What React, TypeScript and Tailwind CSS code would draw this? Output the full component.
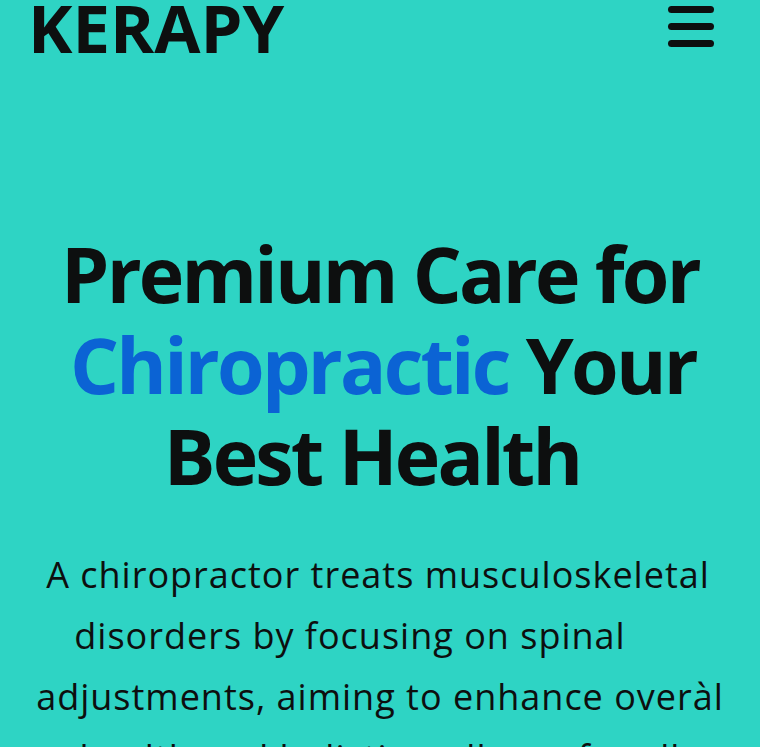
import React from "react";

export default function App() {
  return (
    <div className="min-h-[747px] w-full overflow-hidden bg-[#2ed4c4] text-[#0d0f0f]" style={{ fontFamily: '"Open Sans", "Noto Sans", sans-serif' }}>
      <header className="flex items-start justify-between pl-[28px] pr-[46px]">
        <div className="text-[67px] font-bold leading-[54px] tracking-[0px]">KERAPY</div>
        <button className="mt-[6px] flex flex-col gap-[10px]" aria-label="menu">
          <span className="block h-[7px] w-[46px] rounded-full bg-[#0d0f0f]" />
          <span className="block h-[7px] w-[46px] rounded-full bg-[#0d0f0f]" />
          <span className="block h-[7px] w-[46px] rounded-full bg-[#0d0f0f]" />
        </button>
      </header>
      <main className="flex flex-col items-center pt-[174px]">
        <h1 className="text-center text-[77px] font-bold leading-[91px] tracking-[-2.8px]">
          <span className="block">Premium Care for</span>
          <span className="block pl-[6px]">
            <span className="text-[#0b63d4]">Chiropractic</span> Your
          </span>
          <span className="block pr-[16px]">Best Health</span>
        </h1>
        <p className="mt-[43px] text-center text-[36px] leading-[61px] tracking-[1px]">
          <span className="block pr-[4px]">A chiropractor treats musculoskeletal</span>
          <span className="block pr-[60px]">disorders by focusing on spinal</span>
          <span className="block">adjustments, aiming to enhance overàl</span>
          <span className="block">health and holistic wellness for all</span>
        </p>
      </main>
    </div>
  );
}
